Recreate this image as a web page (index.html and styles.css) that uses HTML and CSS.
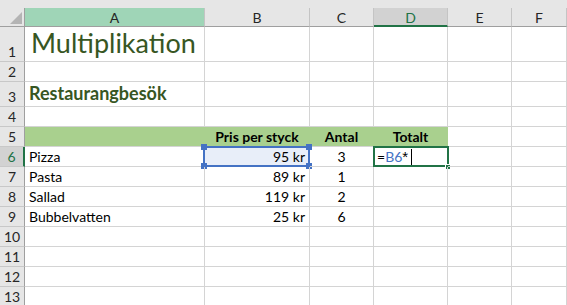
FILE: index.html
```html
<!DOCTYPE html>
<html lang="sv">
<head>
    <meta charset="UTF-8">
    <title>Multiplikation</title>
    <link rel="stylesheet" href="styles.css">
</head>
<body>
    <div class="topbar"></div>
    <div class="sheet">
        <!-- column headers -->
        <div class="corner"><span class="tri"></span></div>
        <div class="col col-a">A</div>
        <div class="col">B</div>
        <div class="col">C</div>
        <div class="col col-active">D</div>
        <div class="col">E</div>
        <div class="col">F</div>

        <!-- row 1 -->
        <div class="row">1</div>
        <div class="cell title">Multiplikation</div>
        <div class="cell"></div><div class="cell"></div><div class="cell"></div><div class="cell"></div><div class="cell"></div>

        <!-- row 2 -->
        <div class="row">2</div>
        <div class="cell"></div><div class="cell"></div><div class="cell"></div><div class="cell"></div><div class="cell"></div><div class="cell"></div>

        <!-- row 3 -->
        <div class="row">3</div>
        <div class="cell subtitle">Restaurangbesök</div>
        <div class="cell"></div><div class="cell"></div><div class="cell"></div><div class="cell"></div><div class="cell"></div>

        <!-- row 4 -->
        <div class="row">4</div>
        <div class="cell"></div><div class="cell"></div><div class="cell"></div><div class="cell"></div><div class="cell"></div><div class="cell"></div>

        <!-- row 5 -->
        <div class="row">5</div>
        <div class="cell head"></div>
        <div class="cell head center">Pris per styck</div>
        <div class="cell head center">Antal</div>
        <div class="cell head center">Totalt</div>
        <div class="cell"></div><div class="cell"></div>

        <!-- row 6 -->
        <div class="row row-active">6</div>
        <div class="cell">Pizza</div>
        <div class="cell right ref">95 kr
            <span class="ref-frame"></span>
            <span class="knob tl"></span><span class="knob tr"></span>
            <span class="knob bl"></span><span class="knob br"></span>
        </div>
        <div class="cell center">3</div>
        <div class="cell editing">=<span class="ref-text">B6</span><span class="star">*</span><span class="caret"></span>
            <span class="edit-frame"></span>
            <span class="fill-knob"></span>
        </div>
        <div class="cell"></div><div class="cell"></div>

        <!-- row 7 -->
        <div class="row">7</div>
        <div class="cell">Pasta</div>
        <div class="cell right">89 kr</div>
        <div class="cell center">1</div>
        <div class="cell"></div><div class="cell"></div><div class="cell"></div>

        <!-- row 8 -->
        <div class="row">8</div>
        <div class="cell">Sallad</div>
        <div class="cell right">119 kr</div>
        <div class="cell center">2</div>
        <div class="cell"></div><div class="cell"></div><div class="cell"></div>

        <!-- row 9 -->
        <div class="row">9</div>
        <div class="cell">Bubbelvatten</div>
        <div class="cell right">25 kr</div>
        <div class="cell center">6</div>
        <div class="cell"></div><div class="cell"></div><div class="cell"></div>

        <div class="row">10</div>
        <div class="cell"></div><div class="cell"></div><div class="cell"></div><div class="cell"></div><div class="cell"></div><div class="cell"></div>
        <div class="row">11</div>
        <div class="cell"></div><div class="cell"></div><div class="cell"></div><div class="cell"></div><div class="cell"></div><div class="cell"></div>
        <div class="row">12</div>
        <div class="cell"></div><div class="cell"></div><div class="cell"></div><div class="cell"></div><div class="cell"></div><div class="cell"></div>
        <div class="row">13</div>
        <div class="cell"></div><div class="cell"></div><div class="cell"></div><div class="cell"></div><div class="cell"></div><div class="cell"></div>
    </div>
</body>
</html>
```

FILE: styles.css
```css
* {
    margin: 0;
    padding: 0;
    box-sizing: border-box;
}

:root {
    --header-bg: #e6e6e6;
    --header-active: #d2d2d2;
    --grid-line: #d4d4d4;
    --excel-green: #217346;
    --ref-blue: #4472c4;
    --title-green: #375623;
}

body {
    font-family: Lato, "Liberation Sans", sans-serif;
    font-size: 14px;
    color: #000;
    background: #fff;
    width: 567px;
    height: 305px;
    overflow: hidden;
}

.topbar {
    height: 8px;
    background: var(--header-bg);
}

.sheet {
    display: grid;
    grid-template-columns: 25px 180px 105px 64px 74px 64px 1fr;
    grid-template-rows: 19px 35px 20px 25px repeat(10, 20px);
}

/* headers */
.corner {
    background: var(--header-bg);
    border-right: 1px solid #9f9f9f;
    border-bottom: 1px solid #9f9f9f;
    display: flex;
    justify-content: flex-end;
    align-items: flex-end;
    padding: 0 2px 2px 0;
}

.tri {
    width: 0;
    height: 0;
    border-left: 12px solid transparent;
    border-bottom: 12px solid #b4b4b4;
}

.col {
    background: var(--header-bg);
    border-right: 1px solid #c4c4c4;
    border-bottom: 1px solid #9f9f9f;
    display: flex;
    justify-content: center;
    align-items: center;
    color: #262626;
    padding-top: 1px;
}

.col-a {
    background: #9fd5b7;
}

.col-active {
    background: var(--header-active);
    color: var(--excel-green);
    border-bottom: 2px solid var(--excel-green);
}

.row {
    background: var(--header-bg);
    border-right: 1px solid #9f9f9f;
    border-bottom: 1px solid #c8c8c8;
    display: flex;
    justify-content: center;
    align-items: flex-end;
    color: #262626;
    padding-bottom: 1px;
}

.row-active {
    background: var(--header-active);
    color: var(--excel-green);
    border-right: 2px solid var(--excel-green);
}

/* cells */
.cell {
    position: relative;
    border-right: 1px solid var(--grid-line);
    border-bottom: 1px solid var(--grid-line);
    display: flex;
    align-items: flex-end;
    padding: 0 4px 1px 4px;
    white-space: nowrap;
}

.center {
    justify-content: center;
}

.right {
    justify-content: flex-end;
}

.title {
    font-size: 27px;
    color: var(--title-green);
    padding-left: 6px;
    padding-bottom: 2px;
}

.subtitle {
    font-size: 18px;
    font-weight: bold;
    color: var(--title-green);
    padding-bottom: 2px;
}

.head {
    background: #a9d08e;
    border-right-color: #a9d08e;
    font-weight: bold;
}

/* referenced cell B6 */
.ref {
    background: #e8eef9;
}

.ref-frame {
    position: absolute;
    left: -2px;
    top: -1px;
    right: -1px;
    bottom: -1px;
    border: 2px solid var(--ref-blue);
}

.knob {
    position: absolute;
    width: 6px;
    height: 6px;
    background: var(--ref-blue);
}

.knob.tl { left: -4px; top: -3px; }
.knob.tr { right: -3px; top: -3px; }
.knob.bl { left: -4px; bottom: -3px; }
.knob.br { right: -3px; bottom: -3px; }

/* cell being edited D6 */
.editing {
    padding-left: 3px;
}

.ref-text {
    color: var(--ref-blue);
}

.star {
    font-family: "Liberation Sans", sans-serif;
    font-size: 15px;
    align-self: flex-start;
    margin-top: 1px;
}

.caret {
    display: inline-block;
    width: 1px;
    height: 16px;
    background: #000;
    margin-left: 3px;
}

.edit-frame {
    position: absolute;
    left: -1px;
    top: -1px;
    right: -2px;
    bottom: -1px;
    border: 2px solid var(--excel-green);
}

.fill-knob {
    position: absolute;
    right: -4px;
    bottom: -4px;
    width: 6px;
    height: 6px;
    background: var(--excel-green);
    border: 1px solid #fff;
}
```
